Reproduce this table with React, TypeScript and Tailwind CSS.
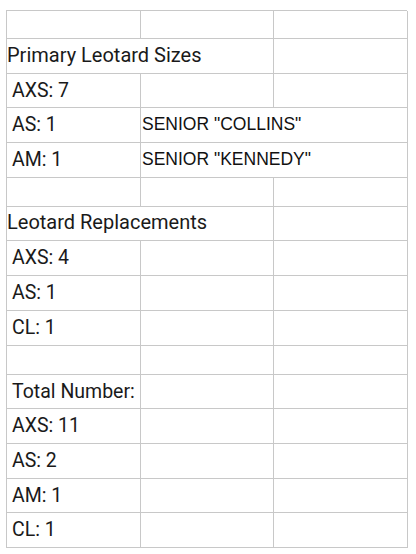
type Row = {
  h: string
  cells: { text?: string; span?: number; kind?: "title" | "label" | "note" }[]
}

const rows: Row[] = [
  { h: "h-[28px]", cells: [{}, {}, {}] },
  { h: "h-[35px]", cells: [{ text: "Primary Leotard Sizes", span: 2, kind: "title" }, {}] },
  { h: "h-[34px]", cells: [{ text: "AXS: 7", kind: "label" }, {}, {}] },
  { h: "h-[35px]", cells: [{ text: "AS: 1", kind: "label" }, { text: 'SENIOR "COLLINS"', span: 2, kind: "note" }] },
  { h: "h-[35px]", cells: [{ text: "AM: 1", kind: "label" }, { text: 'SENIOR "KENNEDY"', span: 2, kind: "note" }] },
  { h: "h-[29px]", cells: [{}, {}, {}] },
  { h: "h-[34px]", cells: [{ text: "Leotard Replacements", span: 2, kind: "title" }, {}] },
  { h: "h-[35px]", cells: [{ text: "AXS: 4", kind: "label" }, {}, {}] },
  { h: "h-[35px]", cells: [{ text: "AS: 1", kind: "label" }, {}, {}] },
  { h: "h-[35px]", cells: [{ text: "CL: 1", kind: "label" }, {}, {}] },
  { h: "h-[29px]", cells: [{}, {}, {}] },
  { h: "h-[34px]", cells: [{ text: "Total Number:", kind: "label" }, {}, {}] },
  { h: "h-[35px]", cells: [{ text: "AXS: 11", kind: "label" }, {}, {}] },
  { h: "h-[35px]", cells: [{ text: "AS: 2", kind: "label" }, {}, {}] },
  { h: "h-[34px]", cells: [{ text: "AM: 1", kind: "label" }, {}, {}] },
  { h: "h-[35px]", cells: [{ text: "CL: 1", kind: "label" }, {}, {}] },
]

const kindClass = {
  title: "pl-0 pb-[3px] font-['Roboto',sans-serif] text-[20px] text-[#1a1a1a]",
  label: "pl-[5px] font-['Roboto',sans-serif] text-[19.5px] text-[#1a1a1a]",
  note: "pl-px font-['Liberation_Sans',Arial,sans-serif] text-[17.5px] text-[#111]",
}

export default function App() {
  return (
    <div className="min-h-[554px] w-[416px] bg-white pl-[6px] pt-[10px]">
      <div className="grid w-[401px] grid-cols-[134px_133px_134px] border-l border-t border-[#c8c8c8]">
        {rows.map((row, r) =>
          row.cells.map((cell, c) => (
            <div
              key={`${r}-${c}`}
              className={`flex items-center overflow-visible whitespace-nowrap border-b border-r border-[#c8c8c8] leading-none ${row.h} ${
                cell.span === 2 ? "col-span-2" : ""
              } ${cell.kind ? kindClass[cell.kind] : ""}`}
            >
              {cell.text}
            </div>
          )),
        )}
      </div>
    </div>
  )
}
